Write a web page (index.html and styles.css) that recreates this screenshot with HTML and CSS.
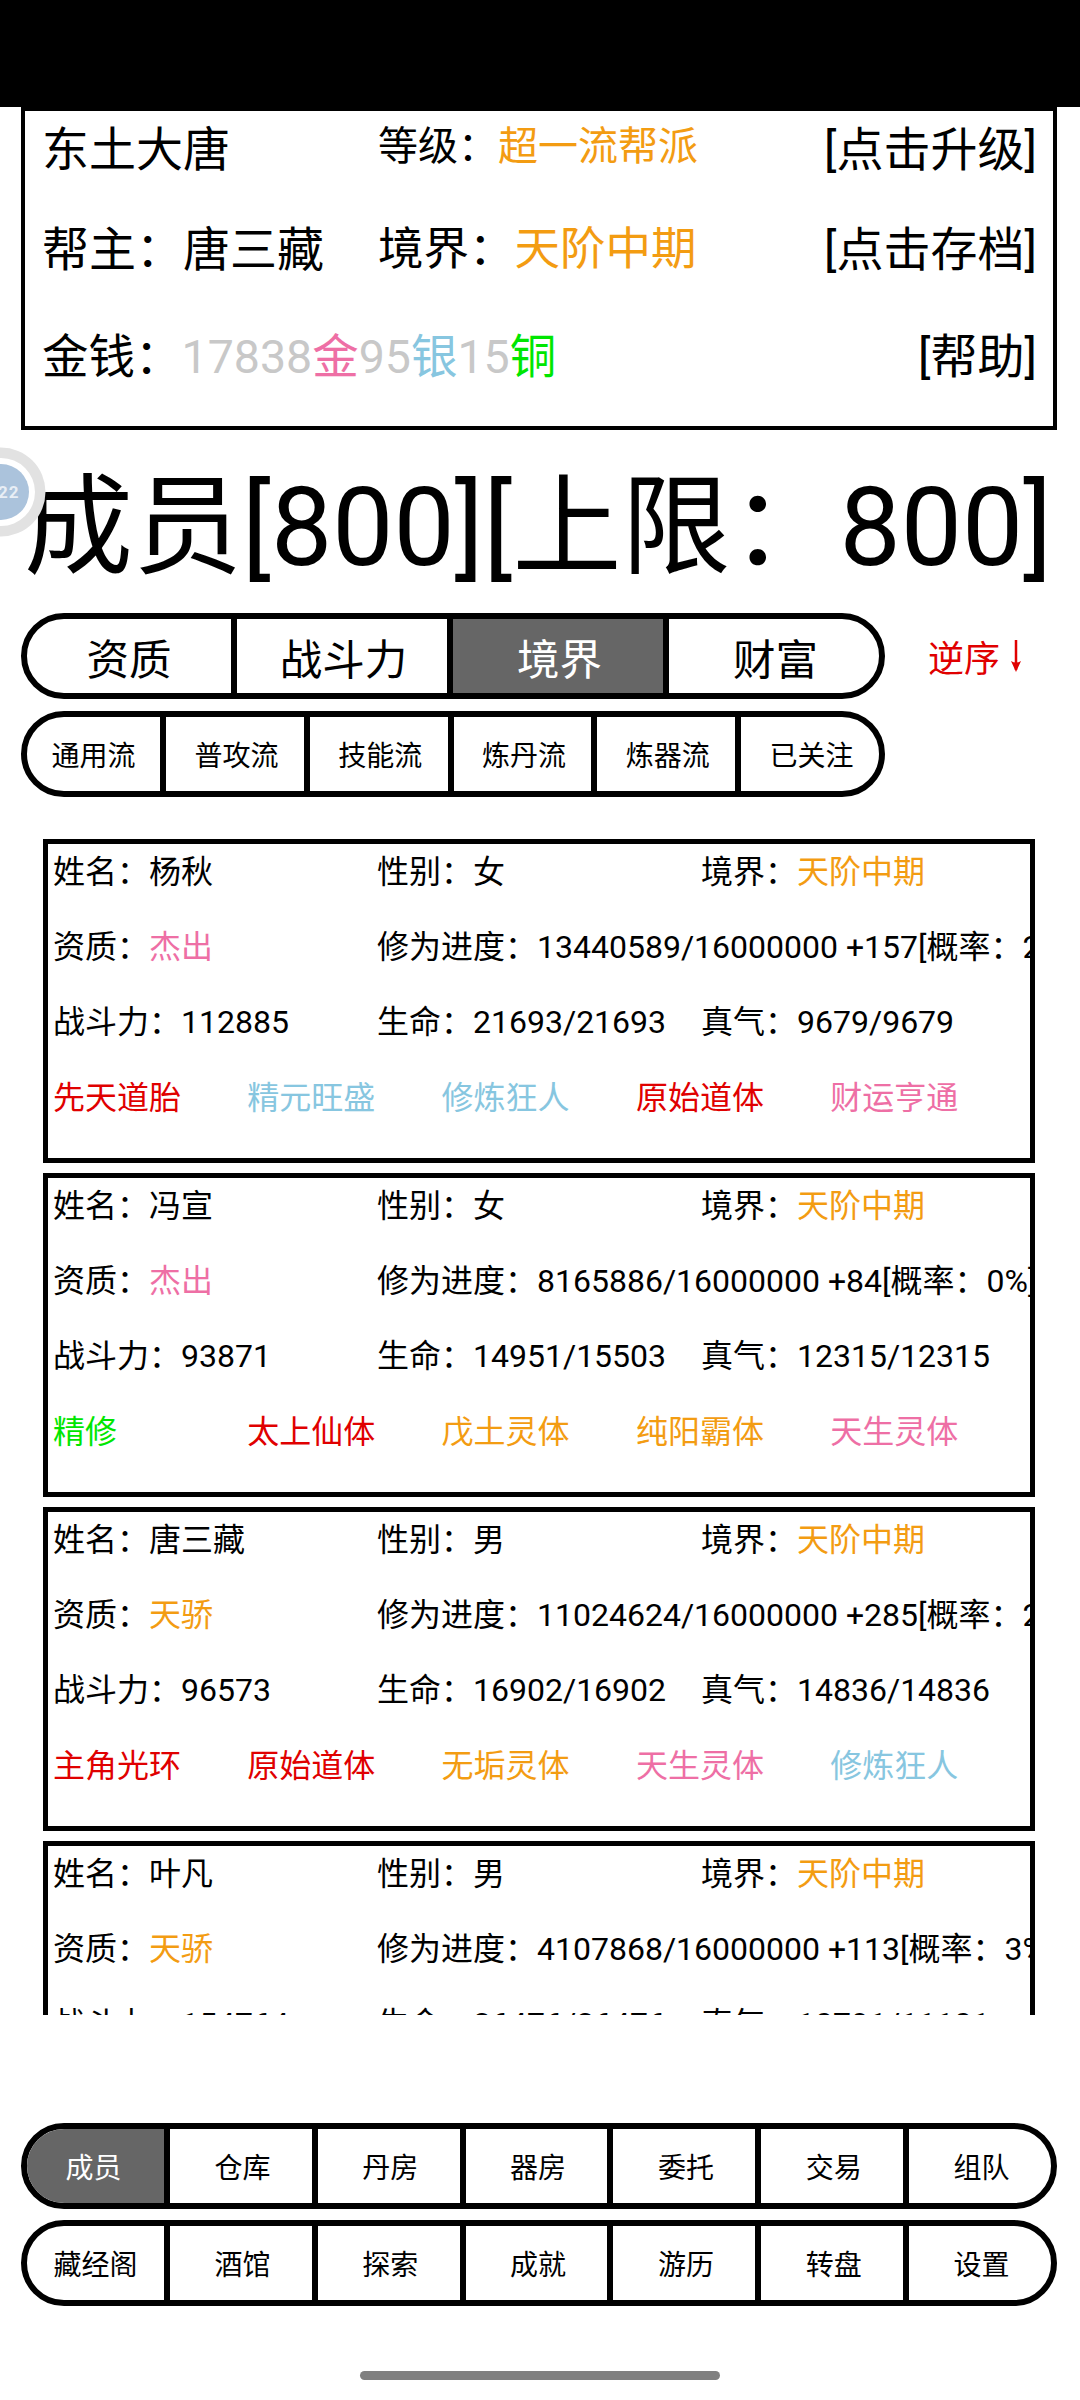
FILE: index.html
```html
<!DOCTYPE html>
<html lang="zh-CN">
<head>
  <meta charset="UTF-8" />
  <meta name="viewport" content="width=device-width, initial-scale=1.0" />
  <title>成员</title>
  <link rel="stylesheet" href="styles.css">
</head>
<body>
  <div class="top-bar"></div>

  <div class="gang-panel">
    <div class="gang-row row-first">
      <div class="gang-left">东土大唐</div>
      <div class="gang-mid small">等级：<span class="orange">超一流帮派</span></div>
      <div class="gang-btn">[点击升级]</div>
    </div>
    <div class="gang-row">
      <div class="gang-left">帮主：唐三藏</div>
      <div class="gang-mid">境界：<span class="orange">天阶中期</span></div>
      <div class="gang-btn">[点击存档]</div>
    </div>
    <div class="gang-row row-money">
      <div class="gang-money">金钱：<span class="silver">17838</span><span class="pink">金</span><span class="silver">95</span><span class="blue">银</span><span class="silver">15</span><span class="green">铜</span></div>
      <div class="gang-btn">[帮助]</div>
    </div>
  </div>

  <!-- 悬浮球 -->
  <div class="float-ball">
    <svg width="46" height="90" viewBox="0 0 46 90">
      <circle cx="1" cy="45" r="44.5" fill="#e2e2e2" />
      <circle cx="1" cy="45" r="34" fill="#fff" />
      <circle cx="1" cy="45" r="28" fill="#abc3dc" />
      <text x="-2" y="51" class="ball-text">22</text>
    </svg>
  </div>

  <h1 class="title">成员[800][上限：800]</h1>

  <div class="sort-line">
    <div class="pill pill-sort">
      <div class="cell">资质</div>
      <div class="cell">战斗力</div>
      <div class="cell on">境界</div>
      <div class="cell">财富</div>
    </div>
    <div class="reverse">逆序
      <svg class="arrow" width="14" height="32" viewBox="0 0 14 32">
        <path d="M7 0V30" fill="none" stroke="#e00000" stroke-width="2.5" />
        <path d="M2 21L7 32L12 21Q7 24 2 21Z" fill="#e00000" />
      </svg>
    </div>
  </div>
  <div class="pill pill-filter">
    <div class="cell">通用流</div>
    <div class="cell">普攻流</div>
    <div class="cell">技能流</div>
    <div class="cell">炼丹流</div>
    <div class="cell">炼器流</div>
    <div class="cell">已关注</div>
  </div>

  <div class="member-list">
    <div class="card">
      <div class="info">
        <div>姓名：杨秋</div>
        <div>性别：女</div>
        <div>境界：<span class="orange">天阶中期</span></div>
        <div>资质：<span class="pink">杰出</span></div>
        <div class="wide">修为进度：13440589/16000000 +157[概率：2%]</div>
        <div>战斗力：112885</div>
        <div>生命：21693/21693</div>
        <div>真气：9679/9679</div>
      </div>
      <div class="traits">
        <div class="red">先天道胎</div>
        <div class="blue">精元旺盛</div>
        <div class="blue">修炼狂人</div>
        <div class="red">原始道体</div>
        <div class="pink">财运亨通</div>
      </div>
    </div>

    <div class="card">
      <div class="info">
        <div>姓名：冯宣</div>
        <div>性别：女</div>
        <div>境界：<span class="orange">天阶中期</span></div>
        <div>资质：<span class="pink">杰出</span></div>
        <div class="wide">修为进度：8165886/16000000 +84[概率：0%]</div>
        <div>战斗力：93871</div>
        <div>生命：14951/15503</div>
        <div>真气：12315/12315</div>
      </div>
      <div class="traits">
        <div class="green">精修</div>
        <div class="red">太上仙体</div>
        <div class="orange">戊土灵体</div>
        <div class="orange">纯阳霸体</div>
        <div class="pink">天生灵体</div>
      </div>
    </div>

    <div class="card">
      <div class="info">
        <div>姓名：唐三藏</div>
        <div>性别：男</div>
        <div>境界：<span class="orange">天阶中期</span></div>
        <div>资质：<span class="orange">天骄</span></div>
        <div class="wide">修为进度：11024624/16000000 +285[概率：2%]</div>
        <div>战斗力：96573</div>
        <div>生命：16902/16902</div>
        <div>真气：14836/14836</div>
      </div>
      <div class="traits">
        <div class="red">主角光环</div>
        <div class="red">原始道体</div>
        <div class="orange">无垢灵体</div>
        <div class="pink">天生灵体</div>
        <div class="blue">修炼狂人</div>
      </div>
    </div>

    <div class="card">
      <div class="info">
        <div>姓名：叶凡</div>
        <div>性别：男</div>
        <div>境界：<span class="orange">天阶中期</span></div>
        <div>资质：<span class="orange">天骄</span></div>
        <div class="wide">修为进度：4107868/16000000 +113[概率：3%]</div>
        <div>战斗力：154764</div>
        <div>生命：26476/26476</div>
        <div>真气：10791/11101</div>
      </div>
    </div>
  </div>

  <div class="bottom-nav">
    <div class="pill pill-nav">
      <div class="cell on">成员</div>
      <div class="cell">仓库</div>
      <div class="cell">丹房</div>
      <div class="cell">器房</div>
      <div class="cell">委托</div>
      <div class="cell">交易</div>
      <div class="cell">组队</div>
    </div>
    <div class="pill pill-nav">
      <div class="cell">藏经阁</div>
      <div class="cell">酒馆</div>
      <div class="cell">探索</div>
      <div class="cell">成就</div>
      <div class="cell">游历</div>
      <div class="cell">转盘</div>
      <div class="cell">设置</div>
    </div>
  </div>

  <div class="home-bar"></div>
</body>
</html>
```

FILE: styles.css
```css
* {
  box-sizing: border-box;
}
body {
  margin: 0;
  width: 1080px;
  height: 2400px;
  overflow: hidden;
  position: relative;
  background: #fff;
  color: #000;
  font-family: Roboto, "Noto Sans CJK SC", sans-serif;
}

.orange { color: #f39c12; }
.pink { color: #ee6fa5; }
.blue { color: #87c6e0; }
.green { color: #00e600; }
.red { color: #e00000; }
.silver { color: #c8c8c8; }

.top-bar {
  height: 107px;
  background: #000;
}

/* 帮派信息 */
.gang-panel {
  width: 1036px;
  height: 323px;
  margin-left: 21px;
  border: 4px solid #000;
  padding: 7px 16px 0 17px;
  font-size: 47px;
  line-height: 60px;
}
.gang-row {
  display: flex;
  height: 106px;
  padding-top: 2px;
}
.row-first {
  height: 100px;
}
.row-money {
  padding-top: 3px;
}
.gang-left {
  width: 336px;
}
.gang-mid {
  flex: 1;
  font-size: 45.5px;
}
.gang-mid.small {
  font-size: 40px;
  line-height: 54px;
}
.gang-money {
  flex: 1;
  font-size: 46.5px;
}
.gang-btn {
  white-space: nowrap;
}

/* 悬浮球 */
.float-ball {
  position: absolute;
  left: 0;
  top: 447px;
  width: 46px;
  height: 90px;
}
.ball-text {
  font-size: 17px;
  font-weight: 700;
  fill: #e8eef5;
  letter-spacing: 1px;
}

.title {
  margin: 15px 0 0 24px;
  height: 168px;
  font-size: 109px;
  line-height: 166px;
  font-weight: 400;
  white-space: nowrap;
}

/* 胶囊按钮组 */
.pill {
  display: grid;
  border: 6px solid #000;
  border-radius: 43px;
  overflow: hidden;
  margin-left: 21px;
  height: 86px;
}
.cell {
  display: flex;
  align-items: center;
  justify-content: center;
  white-space: nowrap;
  border-left: 6px solid #000;
  padding-left: 3px;
}
.cell:first-child {
  border-left: 0;
  padding-left: 0;
}
.cell.on {
  background: #666;
  color: #fff;
}

.sort-line {
  display: flex;
  align-items: center;
}
.pill-sort {
  width: 864px;
  grid-template-columns: 204px repeat(3, 1fr);
  font-size: 42.5px;
}
.reverse {
  display: flex;
  align-items: center;
  gap: 9px;
  margin-left: 43px;
  font-size: 36px;
  color: #e00000;
  white-space: nowrap;
}
.arrow {
  flex: none;
}
.pill-filter {
  width: 864px;
  margin-top: 12px;
  grid-template-columns: 133px repeat(5, 1fr);
  font-size: 28px;
}

/* 成员列表 */
.member-list {
  height: 1176px;
  margin: 42px 0 0 43px;
  width: 992px;
  overflow: hidden;
  display: flex;
  flex-direction: column;
  gap: 10px;
}
.card {
  flex: none;
  height: 324px;
  border: 5px solid #000;
  padding: 5px 0 0 5px;
  font-size: 32px;
  line-height: 46px;
}
.info {
  display: grid;
  grid-template-columns: 324px 324px 1fr;
  row-gap: 29px;
}
.info > div {
  white-space: nowrap;
  overflow: hidden;
}
.info .wide {
  grid-column: span 2;
}
.traits {
  display: flex;
  margin-top: 30px;
}
.traits > div {
  width: 194.3px;
  white-space: nowrap;
}

/* 底部导航 */
.bottom-nav {
  margin-top: 108px;
  display: flex;
  flex-direction: column;
  gap: 11px;
}
.pill-nav {
  width: 1036px;
  grid-template-columns: 137px repeat(6, 1fr);
  font-size: 28px;
}
.pill-nav .cell.on {
  padding-right: 4px;
}

.home-bar {
  width: 360px;
  height: 9px;
  margin: 65px auto 0;
  border-radius: 5px;
  background: #808080;
}
```
